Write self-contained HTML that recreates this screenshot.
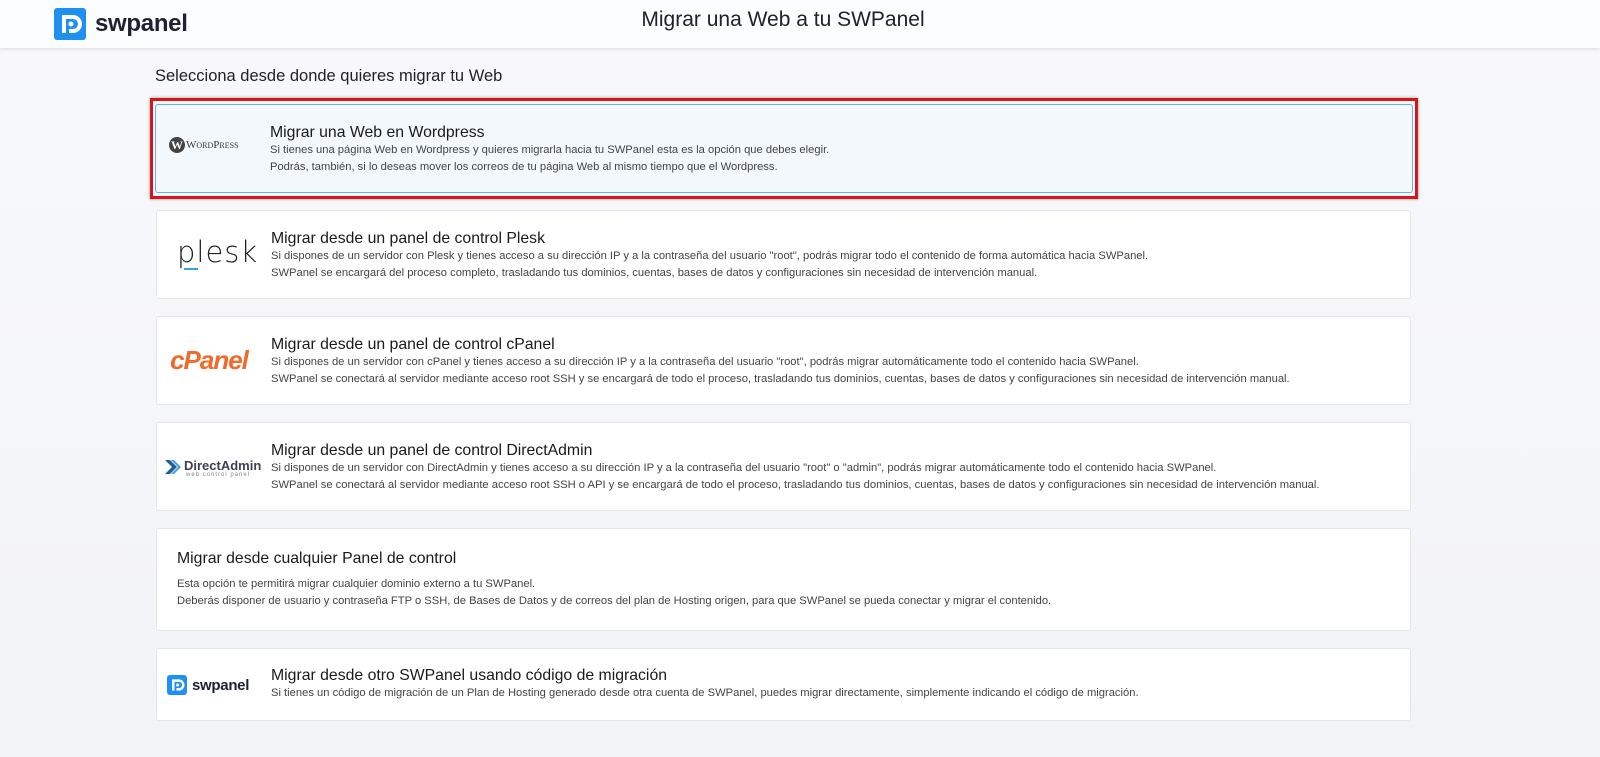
<!DOCTYPE html>
<html><head><meta charset="utf-8"><style>
*{margin:0;padding:0;box-sizing:border-box}
body{width:1600px;height:757px;background:linear-gradient(#f8f9fb,#f2f3f6);font-family:"Liberation Sans",sans-serif;color:#222;position:relative;overflow:hidden}
.hdr{position:absolute;left:0;top:0;width:1600px;height:48px;background:#fcfdfe;box-shadow:0 1px 4px rgba(0,0,0,.12)}
.hdr h1{position:absolute;left:0;width:1566px;text-align:center;top:8px;font-weight:normal;font-size:21px;color:#222}
.logo{position:absolute;display:flex;align-items:center}
.ic{background:#1e90f0;border-radius:3px;position:relative}
.lt{font-weight:bold;color:#1a2233;letter-spacing:-.3px}
h2{position:absolute;left:155px;top:67px;font-size:16.5px;font-weight:normal;color:#222}
.card{position:absolute;left:156px;width:1255px;background:#fff;border:1px solid #e4e6ea;border-radius:3px}
.t{position:absolute;left:114px;font-size:15.8px;color:#1a1a1a}
.d{position:absolute;left:114px;font-size:11.2px;color:#444;line-height:17px;white-space:nowrap}
.lg{position:absolute;left:0;width:100px;text-align:center}
</style></head><body>
<div class="hdr">
 <div class="logo" style="left:54px;top:8px">
  <div class="ic" style="width:32px;height:32px"><svg width="32" height="32" viewBox="0 0 32 32"><path d="M10 25V9h9a7 7 0 0 1 0 14h-4" fill="none" stroke="#fff" stroke-width="4"/><circle cx="17" cy="16" r="2.5" fill="#fff"/></svg></div>
  <span class="lt" style="font-size:24px;margin-left:9px">swpanel</span>
 </div>
 <h1>Migrar una Web a tu SWPanel</h1>
</div>
<h2>Selecciona desde donde quieres migrar tu Web</h2>
<div style="position:absolute;left:150px;top:98px;width:1268px;height:101px;border:3px solid #d9141b;box-shadow:0 0 3px rgba(0,0,0,.4)"></div>
<div class="card" style="top:104px;height:89px;left:155px;width:1258px;background:#f3f8fc;border-color:#66b3e3">
 <div style="position:absolute;top:32px;left:13px;font-family:'Liberation Serif',serif;font-size:11px;color:#333;display:flex;align-items:center;white-space:nowrap"><span style="display:inline-block;width:16px;height:16px;border-radius:50%;background:#444;color:#fff;font-size:12px;line-height:16px;text-align:center;font-weight:bold;margin-right:1px">W</span>W<span style="font-size:8px">ORD</span>P<span style="font-size:8px">RESS</span></div>
 <div class="t" style="top:19px;left:114px">Migrar una Web en Wordpress</div>
 <div class="d" style="top:37px;left:114px">Si tienes una página Web en Wordpress y quieres migrarla hacia tu SWPanel esta es la opción que debes elegir.<br>Podrás, también, si lo deseas mover los correos de tu página Web al mismo tiempo que el Wordpress.</div>
</div>
<div class="card" style="top:210px;height:89px">
 <div class="lg" style="top:24px;left:20px;width:70px;font-size:29px;color:#222;text-align:left;letter-spacing:1px;font-family:'DejaVu Sans',sans-serif;font-weight:200">plesk</div>
 <div style="position:absolute;left:27px;top:57px;width:14px;height:2px;background:#3aa3dd"></div>
 <div class="t" style="top:19px">Migrar desde un panel de control Plesk</div>
 <div class="d" style="top:37px">Si dispones de un servidor con Plesk y tienes acceso a su dirección IP y a la contraseña del usuario "root", podrás migrar todo el contenido de forma automática hacia SWPanel.<br>SWPanel se encargará del proceso completo, trasladando tus dominios, cuentas, bases de datos y configuraciones sin necesidad de intervención manual.</div>
</div>
<div class="card" style="top:316px;height:89px">
 <div class="lg" style="top:28px;left:6px;width:92px;font-size:26px;font-weight:bold;font-style:italic;color:#f06a2a;letter-spacing:-1px">cPanel</div>
 <div class="t" style="top:19px">Migrar desde un panel de control cPanel</div>
 <div class="d" style="top:37px">Si dispones de un servidor con cPanel y tienes acceso a su dirección IP y a la contraseña del usuario "root", podrás migrar automáticamente todo el contenido hacia SWPanel.<br>SWPanel se conectará al servidor mediante acceso root SSH y se encargará de todo el proceso, trasladando tus dominios, cuentas, bases de datos y configuraciones sin necesidad de intervención manual.</div>
</div>
<div class="card" style="top:422px;height:89px">
 <svg style="position:absolute;left:8px;top:35px" width="16" height="18" viewBox="0 0 16 18"><path d="M0 2l7 7-7 7h5l7-7-7-7z" fill="#1f5f9e"/><path d="M6 2l7 7-7 7h3l7-7-7-7z" fill="#4aa0e0"/></svg>
 <div style="position:absolute;left:27px;top:35px;font-size:13px;font-weight:bold;color:#3a4250">DirectAdmin</div>
 <div style="position:absolute;left:29px;top:49px;font-size:6px;color:#888;letter-spacing:1px">web control panel</div>
 <div class="t" style="top:19px">Migrar desde un panel de control DirectAdmin</div>
 <div class="d" style="top:37px">Si dispones de un servidor con DirectAdmin y tienes acceso a su dirección IP y a la contraseña del usuario "root" o "admin", podrás migrar automáticamente todo el contenido hacia SWPanel.<br>SWPanel se conectará al servidor mediante acceso root SSH o API y se encargará de todo el proceso, trasladando tus dominios, cuentas, bases de datos y configuraciones sin necesidad de intervención manual.</div>
</div>
<div class="card" style="top:528px;height:103px">
 <div class="t" style="top:21px;left:20px">Migrar desde cualquier Panel de control</div>
 <div class="d" style="top:47px;left:20px">Esta opción te permitirá migrar cualquier dominio externo a tu SWPanel.<br>Deberás disponer de usuario y contraseña FTP o SSH, de Bases de Datos y de correos del plan de Hosting origen, para que SWPanel se pueda conectar y migrar el contenido.</div>
</div>
<div class="card" style="top:648px;height:73px">
 <div class="logo" style="left:10px;top:26px">
  <div class="ic" style="width:20px;height:20px"><svg width="20" height="20" viewBox="0 0 32 32"><path d="M10 25V9h9a7 7 0 0 1 0 14h-4" fill="none" stroke="#fff" stroke-width="4"/><circle cx="17" cy="16" r="2.5" fill="#fff"/></svg></div>
  <span class="lt" style="font-size:15px;margin-left:5px">swpanel</span>
 </div>
 <div class="t" style="top:18px">Migrar desde otro SWPanel usando código de migración</div>
 <div class="d" style="top:36px">Si tienes un código de migración de un Plan de Hosting generado desde otra cuenta de SWPanel, puedes migrar directamente, simplemente indicando el código de migración.</div>
</div>
</body></html>
